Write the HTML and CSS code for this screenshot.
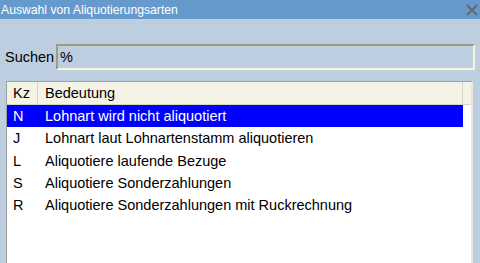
FILE: index.html
```html
<!DOCTYPE html>
<html lang="de">
<head>
    <meta charset="utf-8">
    <title>Auswahl von Aliquotierungsarten</title>
    <link rel="stylesheet" href="styles.css">
</head>
<body>
    <div class="window">
        <div class="titlebar">
            <span class="title">Auswahl von Aliquotierungsarten</span>
            <svg class="close" width="12" height="12" viewBox="0 0 12 12">
                <path d="M1 1 L11 11 M11 1 L1 11" stroke="#666a72" stroke-width="2" fill="none"/>
            </svg>
        </div>

        <div class="search">
            <label class="search-label">Suchen</label>
            <div class="search-field">%</div>
        </div>

        <div class="list">
            <div class="list-head">
                <div class="col-kz">Kz</div>
                <div class="col-text">Bedeutung</div>
            </div>
            <div class="row selected">
                <div class="col-kz">N</div>
                <div class="col-text">Lohnart wird nicht aliquotiert</div>
            </div>
            <div class="row">
                <div class="col-kz">J</div>
                <div class="col-text">Lohnart laut Lohnartenstamm aliquotieren</div>
            </div>
            <div class="row">
                <div class="col-kz">L</div>
                <div class="col-text">Aliquotiere laufende Bezuge</div>
            </div>
            <div class="row">
                <div class="col-kz">S</div>
                <div class="col-text">Aliquotiere Sonderzahlungen</div>
            </div>
            <div class="row">
                <div class="col-kz">R</div>
                <div class="col-text">Aliquotiere Sonderzahlungen mit Ruckrechnung</div>
            </div>
        </div>
    </div>
</body>
</html>
```

FILE: styles.css
```css
body {
    margin: 0;
    font-family: "Liberation Sans", Arial, sans-serif;
    background-color: #bdcee0;
    color: #000000;
    overflow: hidden;
}

.window {
    width: 480px;
    height: 263px;
    display: flex;
    flex-direction: column;
}

.titlebar {
    height: 19px;
    background-color: #6699cc;
    display: flex;
    align-items: center;
    justify-content: space-between;
    flex-shrink: 0;
}

.title {
    color: #ffffff;
    font-size: 12.2px;
    padding-left: 1px;
}

.close {
    margin-right: 2px;
}

.search {
    display: flex;
    align-items: center;
    margin-top: 25px;
    padding-left: 5px;
}

.search-label {
    font-size: 14.5px;
    width: 51px;
}

.search-field {
    width: 413px;
    height: 22px;
    line-height: 22px;
    font-size: 14.5px;
    padding-left: 2px;
    border-top: 2px solid #9c9c84;
    border-left: 2px solid #9c9c84;
    border-right: 2px solid #f6f6dc;
    border-bottom: 2px solid #f6f6dc;
}

.list {
    margin: 11px 7px 0 6px;
    flex: 1;
    background-color: #ffffff;
    border-top: 1px solid #a0a0a0;
    border-left: 1px solid #a0a0a0;
    border-right: 2px solid #e8e8d8;
}

.list-head {
    display: flex;
    height: 22px;
    line-height: 22px;
    font-size: 14.5px;
    background-color: #f4f3e6;
    border-bottom: 1px solid #d8d6c0;
}

.list-head .col-kz {
    border-right: 1px solid #d8d6c0;
}

.list-head .col-text {
    width: 417px;
    border-right: 1px solid #d8d6c0;
}

.row {
    display: flex;
    width: 456px;
    height: 22.3px;
    line-height: 22px;
    font-size: 14.5px;
}

.row.selected {
    background-color: #0000ff;
    color: #ffffff;
}

.col-kz {
    width: 31px;
    padding-left: 6px;
    box-sizing: border-box;
}

.col-text {
    padding-left: 7px;
}
```
